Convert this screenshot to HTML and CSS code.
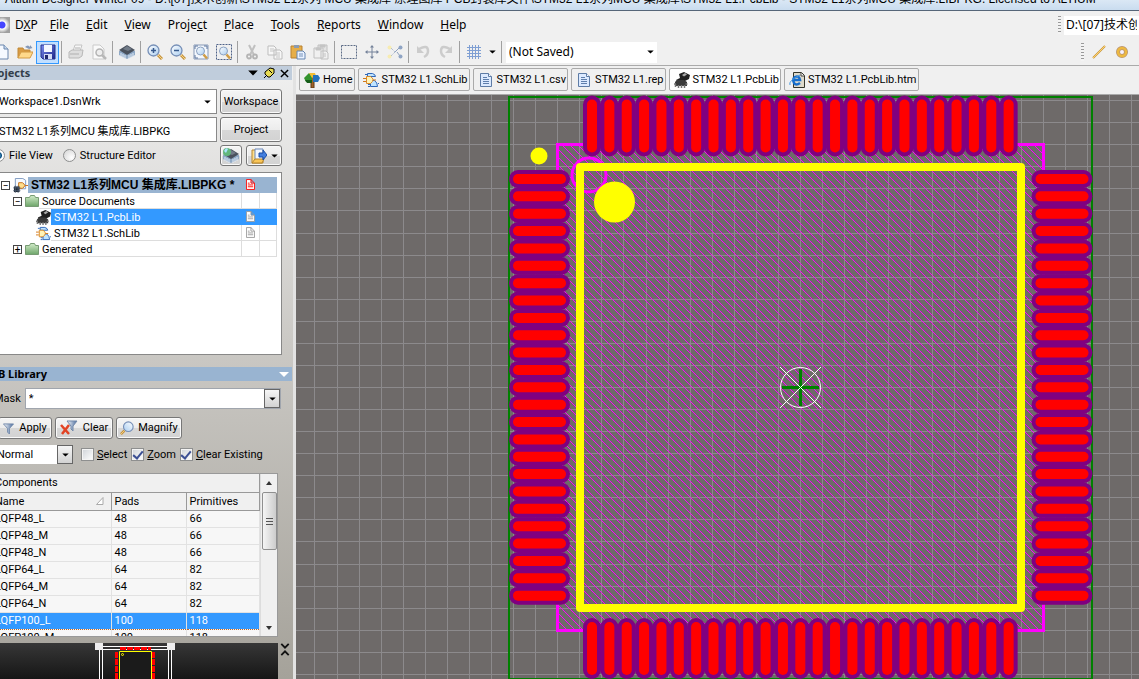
FILE: index.html
```html
<!DOCTYPE html>
<html lang="zh-CN">
<head>
<meta charset="utf-8">
<title>Altium Designer Winter 09</title>
<link rel="stylesheet" href="styles.css">
</head>
<body>
<svg class="defs" aria-hidden="true">
  <defs>
    <linearGradient id="gFolder" x1="0" y1="0" x2="0" y2="1"><stop offset="0" stop-color="#d2ecc9"/><stop offset="1" stop-color="#6da569"/></linearGradient>
    <linearGradient id="gSave" x1="0" y1="0" x2="1" y2="1"><stop offset="0" stop-color="#7d8ff0"/><stop offset="1" stop-color="#1c2488"/></linearGradient>
    <linearGradient id="gLens" x1="0" y1="0" x2="1" y2="1"><stop offset="0" stop-color="#fff"/><stop offset="1" stop-color="#a9cdf0"/></linearGradient>
    <linearGradient id="gFunnel"><stop offset="0" stop-color="#fff"/><stop offset="1" stop-color="#43679b"/></linearGradient>
    <symbol id="i-new" viewBox="0 0 16 16"><path d="M3 1h7l4 4v10H3z" fill="#f5f9ff" stroke="#6b86ad"/><path d="M10 1v4h4" fill="#c8d9ee" stroke="#6b86ad"/></symbol>
    <symbol id="i-open" viewBox="0 0 16 16"><path d="M1 14V4h5l1 2h6v3" fill="#d99b43" stroke="#c18a39"/><path d="M1 14l3-6h12l-3 6z" fill="#ffd98a" stroke="#d29a43"/><path d="M8 3q3-3 5 0V1l2.500 3-3.500 1z" fill="#8498b8"/></symbol>
    <symbol id="i-save" viewBox="0 0 16 16"><path d="M1 1h14v14H3l-2-2z" fill="url(#gSave)" stroke="#27318f"/><path d="M4 1h8v7H4z" fill="#f4f7ff"/><path d="M4 10h8v5H4z" fill="#d5dcf5"/><path d="M5 11h3v4H5z" fill="#20286f"/></symbol>
    <symbol id="i-print" viewBox="0 0 16 16"><path d="M5 7l2-6h7l-2 6" fill="#f7f7f7" stroke="#c4c4c4"/><path d="M1 8l3-2h11l-1 6-3 2H1z" fill="#dedede" stroke="#b8b8b8"/><path d="M2 10h9M7 4h5" stroke="#b0b0b0"/></symbol>
    <symbol id="i-preview" viewBox="0 0 16 16"><path d="M2 1h7l4 4v10H2z" fill="#fafafa" stroke="#cacaca"/><circle cx="8.500" cy="8.500" r="3.500" fill="#eee" stroke="#b4b4b4" stroke-width="1.500"/><path d="M11 11l4 4" stroke="#b8b8b8" stroke-width="2.500"/></symbol>
    <symbol id="i-chip" viewBox="0 0 16 16"><path d="M0 7v4l8 4 8-4V7z" fill="#8fa9c6"/><path d="M2 9v4m2-3v4m2-3v4m4-4v4m2-5v4m2-5v4" stroke="#dfe9f4"/><path d="M0 6l8-5 8 5-8 5z" fill="#49515d"/><path d="M4 5l4-3 5 3-4 2z" fill="#717b88"/></symbol>
    <symbol id="i-mag" viewBox="0 0 16 16"><circle cx="6.500" cy="6.500" r="5.500" fill="url(#gLens)" stroke="#768fb7" stroke-width="1.300"/><path d="M11 11l4 4" stroke="#c6933d" stroke-width="3"/><path d="M11 11l4 4" stroke="#f4d58a"/></symbol>
    <symbol id="i-zin" viewBox="0 0 16 16"><use href="#i-mag"/><path d="M4 6.500h5M6.500 4v5" stroke="#36598d" stroke-width="1.500"/></symbol>
    <symbol id="i-zout" viewBox="0 0 16 16"><use href="#i-mag"/><path d="M4 6.500h5" stroke="#36598d" stroke-width="1.500"/></symbol>
    <symbol id="i-zfit" viewBox="0 0 16 16"><path d="M1 1h14v14H1z" fill="#f4f8fd" stroke="#8799b7"/><path d="M2 5V2h3m6 0h3v3M2 11v3h3" fill="none" stroke="#5f779e"/><circle cx="7.500" cy="7" r="4" fill="url(#gLens)" stroke="#8ba1c1"/><path d="M10.500 10.500l3.500 4" stroke="#cf9c45" stroke-width="2.500"/></symbol>
    <symbol id="i-zarea" viewBox="0 0 16 16"><path d="M.5.5h15v15H.5z" fill="none" stroke="#4f6288" stroke-dasharray="2 1"/><circle cx="7.500" cy="7" r="4" fill="url(#gLens)" stroke="#8ba1c1"/><path d="M10.500 10.500l3.500 4" stroke="#cf9c45" stroke-width="2.500"/></symbol>
    <symbol id="i-cut" viewBox="0 0 16 16"><path d="M5 1l5 10M11 1L6 11" stroke="#c0c0c0" stroke-width="2"/><circle cx="5" cy="12.500" r="2" fill="none" stroke="#b4b4b4" stroke-width="1.800"/><circle cx="11" cy="12.500" r="2" fill="none" stroke="#b4b4b4" stroke-width="1.800"/></symbol>
    <symbol id="i-copy" viewBox="0 0 16 16"><path d="M1 2h6l2 2v7H1zM7 6h6l2 2v7H7z" fill="#f7f7f7" stroke="#bdbdbd"/><path d="M3 5h4M3 7h4m2 2h4m-4 2h4m-4 2h4" stroke="#c5c5c5"/></symbol>
    <symbol id="i-paste" viewBox="0 0 16 16"><path d="M1 2h11v12H1z" fill="#e6ae48" stroke="#b98131"/><path d="M4 1h5v3H4z" fill="#8c9bb0"/><path d="M7 7h6l2 2v6H7z" fill="#e9f2ff" stroke="#6585b1"/><path d="M9 10h4m-4 2h4" stroke="#7591ba"/></symbol>
    <symbol id="i-pastes" viewBox="0 0 16 16"><path d="M5 1h9v9H5z" fill="#e3e3e3" stroke="#c0c0c0"/><path d="M1 4h9v10H1zM8 7h5l2 2v6H8z" fill="#f0f0f0" stroke="#c0c0c0"/><path d="M7 1h5v2H7zM3 4h5v2H3zM10 10h3m-3 2h3" fill="#c4c4c4" stroke="#c4c4c4"/></symbol>
    <symbol id="i-rect" viewBox="0 0 16 16"><path d="M.5 1.500h15v13H.5z" fill="none" stroke="#5d6c87" stroke-dasharray="2 1"/></symbol>
    <symbol id="i-move" viewBox="0 0 16 16"><path d="M8 2v12M2 8h12" stroke="#74829a"/><path d="M8 1l2 2.500H6zM8 15l2-2.500H6zM1 8l2.500-2v4zM15 8l-2.500-2v4z" fill="#74829a"/></symbol>
    <symbol id="i-desel" viewBox="0 0 16 16"><path d="M4 4l4 4-4 4" fill="none" stroke="#8da0bd" stroke-dasharray="1 1"/><path d="M8 8l5-5M10 8l3 4" stroke="#8da0bd"/><circle cx="2.500" cy="3.500" r="2" fill="#f7ecb2"/><circle cx="2.500" cy="12.500" r="2" fill="#f7ecb2"/><circle cx="13.500" cy="3.500" r="2" fill="#8fa4c4"/><circle cx="13.500" cy="12.500" r="2" fill="#8fa4c4"/></symbol>
    <symbol id="i-undo" viewBox="0 0 16 16"><path d="M4 5q9-5 9 2 0 4-4 6" fill="none" stroke="#ccc" stroke-width="2.500"/><path d="M2 2v7h7z" fill="#ccc"/></symbol>
    <symbol id="i-redo" viewBox="0 0 16 16"><path d="M12 5Q3 0 3 7q0 4 4 6" fill="none" stroke="#ccc" stroke-width="2.500"/><path d="M14 2v7H7z" fill="#ccc"/></symbol>
    <symbol id="i-grid" viewBox="0 0 16 16"><path d="M1 3.500h14m-14 3h14m-14 3h14m-14 3h14M3.500 1v14m3-14v14m3-14v14m3-14v14" stroke="#7f9fd3"/></symbol>
    <symbol id="i-down" viewBox="0 0 8 5"><path d="M0 .5h8L4 4.500z" fill="#000"/></symbol>
    <symbol id="i-line" viewBox="0 0 16 16"><path d="M2 14L14 2" stroke="#c9963b" stroke-width="2"/><path d="M2 14L14 2" stroke="#ffd36c"/></symbol>
    <symbol id="i-donut" viewBox="0 0 16 16"><circle cx="8" cy="8" r="4" fill="#f7f2ff" stroke="#b99470" stroke-width="4"/><circle cx="8" cy="8" r="4" fill="none" stroke="#edb941" stroke-width="2.500"/></symbol>
    <symbol id="i-home" viewBox="0 0 16 16"><path d="M7 5h3v11H7z" fill="#9d6126" stroke="#5d3918"/><path d="M0 6l5-5 3 3v6H2z" fill="#35942e"/><path d="M1 8h7v3H3z" fill="#165d1a"/><path d="M5 1h6l1 3-4 2z" fill="#f3bd32"/><path d="M9 3h5l2 3-2 4H9z" fill="#2472bd"/></symbol>
    <symbol id="i-sch" viewBox="0 0 16 16"><path d="M4.500 1.500h5q3 1 3 3h-8zM7.500 8.500h4q3 2 3 6h-7z" fill="#bfe4ff" stroke="#2e67ba"/><path d="M3.500 4.500h4q5 3 0 7h-4z" fill="#fff3b8" stroke="#d98a28"/><path d="M0 6.500h3m-3 3h3m7-1.500h3" fill="none" stroke="#d37918"/><path d="M2 2.500h2m1 10h2m-2 2h2m8-3h1" stroke="#2e67ba"/></symbol>
    <symbol id="i-doc" viewBox="0 0 16 16"><path d="M2.500 1.500h8l3 3v10h-11z" fill="#dceaff" stroke="#5e7ca6"/><path d="M10.500 1.500v3h3" fill="#fff" stroke="#5e7ca6"/><path d="M5 5.500h4m-4 2h6m-6 2h6m-6 2h6" stroke="#5f7fac"/></symbol>
    <symbol id="i-pcb" viewBox="0 0 16 16"><path d="M5 2l5-2 6 3-1 4-4 2v1H4L2 8l4-2z" fill="#202020"/><path d="M8 3l3-2 2 1.500-3 2z" fill="#aaa"/><path d="M3 8h7l3 2v4H1v-4z" fill="#3a3a3a"/><path d="M0 12h2m-.500 3v-3m3 4v-3m3 3v-3m3 3v-3m1-1h2" stroke="#777" stroke-width="1.500"/></symbol>
    <symbol id="i-htm" viewBox="0 0 16 16"><path d="M4.500.5h8l3 3v12h-11z" fill="#dedacb" stroke="#33352c"/><path d="M12 1v3h3" fill="#fff" stroke="#444"/><path d="M11 11q-4 3-6 0-2-4 1-6 4-2 5 3H4" fill="none" stroke="#166dcc" stroke-width="2.500"/><path d="M1 13Q-1 9 11 3" fill="none" stroke="#4597df"/></symbol>
    <symbol id="i-folder" viewBox="0 0 14 12"><path d="M.5 2.500h4l1-2h4l1 2h3v9H.5z" fill="url(#gFolder)" stroke="#779b73"/></symbol>
    <symbol id="i-page" viewBox="0 0 10 12"><path d="M.5.5h5l4 4v7h-9zM5.500.5v4h4M2 4.500h2m-2 2h6m-6 2h6" fill="#fff" stroke="currentColor"/></symbol>
    <symbol id="i-pkg" viewBox="0 0 16 16"><path d="M2.500.5h8l3 2v9h-11z" fill="#f6faff" stroke="#7d98bf"/><path d="M6 5h4q5 3 0 6H6zM13 8h3" fill="#ffdf8d" stroke="#c66d17"/><path d="M1 9h6v6H1z" fill="#222a35"/><path d="M0 10.500h8m-8 3h8M2.500 8v8m3-8v8" stroke="#52647a" stroke-width=".7"/></symbol>
    <symbol id="i-chipball" viewBox="0 0 16 16"><use href="#i-chip"/><circle cx="4" cy="4" r="4" fill="#62b77d"/><path d="M1 3q2-4 4-2L3 5z" fill="#a9e4ff"/></symbol>
    <symbol id="i-import" viewBox="0 0 16 16"><path d="M1 2h5l1 2h5v11H1z" fill="#ffdf8a" stroke="#b5852f"/><path d="M4 1h8v11H4z" fill="#f1f7ff" stroke="#6a87b8"/><path d="M1 15l3-4h9l-2 4z" fill="#f9c658" stroke="#b5852f"/><path d="M8 5h4V2l4 5-4 5V9H8z" fill="#447fdf" stroke="#1b4da2"/></symbol>
    <symbol id="i-funnel" viewBox="0 0 12 12"><path d="M.5 1h11L7 6v6L5 10V6z" fill="url(#gFunnel)" stroke="#7188aa"/></symbol>
    <symbol id="i-unfilter" viewBox="0 0 18 16"><path d="M7 1h10l-4 5v5l-2-2V6z" fill="url(#gFunnel)" stroke="#7188aa"/><path d="M1 5l8 9M9 5l-7 9" stroke="#e24324" stroke-width="2.500"/></symbol>
    <symbol id="i-pin" viewBox="0 0 12 12"><path d="M1 11l3-3" stroke="#000"/><path d="M2 5l5-4 4 1v4L7 10H5L2 7z" fill="#e8dc55" stroke="#000"/><path d="M6 3l3 3" stroke="#000"/></symbol>
    <symbol id="i-x" viewBox="0 0 10 10"><path d="M1 1l8 8M9 1L1 9" stroke="#000" stroke-width="1.600"/></symbol>
    <symbol id="i-fold" viewBox="0 0 10 14"><path d="M1 1l4 4 4-4M1 13l4-4 4 4" fill="none" stroke="#111" stroke-width="2"/></symbol>
  </defs>
</svg>

<div class="app">
  <header class="title">Altium Designer Winter 09 - D:\[07]技术创新\STM32 L1系列 MCU 集成库 原理图库 PCB封装库文件\STM32 L1系列MCU 集成库\STM32 L1.PcbLib - STM32 L1系列MCU 集成库.LIBPKG. Licensed to ALTIUM</header>

  <div class="menubar">
    <span class="logo"></span>
    <nav class="menu">
      <button class="first">D<u>X</u>P</button><button><u>F</u>ile</button><button><u>E</u>dit</button><button><u>V</u>iew</button><button>Proje<u>c</u>t</button><button><u>P</u>lace</button><button><u>T</u>ools</button><button><u>R</u>eports</button><button><u>W</u>indow</button><button><u>H</u>elp</button>
    </nav>
    <span class="grip"></span>
    <input class="path" aria-label="Path" value="D:\[07]技术创新">
  </div>

  <div class="toolbar">
    <button class="tool" aria-label="New"><svg><use href="#i-new"/></svg></button>
    <button class="tool" aria-label="Open"><svg><use href="#i-open"/></svg></button>
    <button class="tool active" aria-label="Save"><svg><use href="#i-save"/></svg></button>
    <i class="sep"></i>
    <button class="tool" aria-label="Print"><svg><use href="#i-print"/></svg></button>
    <button class="tool" aria-label="Preview"><svg><use href="#i-preview"/></svg></button>
    <i class="sep"></i>
    <button class="tool" aria-label="Devices"><svg><use href="#i-chip"/></svg></button>
    <i class="sep"></i>
    <button class="tool" aria-label="Zoom in"><svg><use href="#i-zin"/></svg></button>
    <button class="tool" aria-label="Zoom out"><svg><use href="#i-zout"/></svg></button>
    <button class="tool" aria-label="Fit document"><svg><use href="#i-zfit"/></svg></button>
    <button class="tool" aria-label="Zoom area"><svg><use href="#i-zarea"/></svg></button>
    <i class="sep"></i>
    <button class="tool" aria-label="Cut"><svg><use href="#i-cut"/></svg></button>
    <button class="tool" aria-label="Copy"><svg><use href="#i-copy"/></svg></button>
    <button class="tool" aria-label="Paste"><svg><use href="#i-paste"/></svg></button>
    <button class="tool" aria-label="Paste array"><svg><use href="#i-pastes"/></svg></button>
    <i class="sep"></i>
    <button class="tool" aria-label="Select"><svg><use href="#i-rect"/></svg></button>
    <button class="tool" aria-label="Move"><svg><use href="#i-move"/></svg></button>
    <button class="tool" aria-label="Deselect"><svg><use href="#i-desel"/></svg></button>
    <i class="sep"></i>
    <button class="tool" aria-label="Undo"><svg><use href="#i-undo"/></svg></button>
    <button class="tool" aria-label="Redo"><svg><use href="#i-redo"/></svg></button>
    <i class="sep"></i>
    <button class="tool" aria-label="Grid"><svg><use href="#i-grid"/></svg></button>
    <button class="tool narrow" aria-label="Grid options"><svg class="arrow"><use href="#i-down"/></svg></button>
    <i class="sep"></i>
    <span class="combo saved"><select aria-label="Filter"><option>(Not Saved)</option></select><svg class="arrow"><use href="#i-down"/></svg></span>
    <span class="grip"></span>
    <span class="draw-tools">
      <button class="tool" aria-label="Line"><svg><use href="#i-line"/></svg></button>
      <button class="tool" aria-label="Pad"><svg><use href="#i-donut"/></svg></button>
    </span>
  </div>

  <div class="body">
    <aside class="side">
      <div class="panel-head">
        <h2>Projects</h2>
        <button aria-label="Menu"><svg class="menu-arrow"><use href="#i-down"/></svg></button>
        <button aria-label="Pin"><svg><use href="#i-pin"/></svg></button>
        <button aria-label="Close"><svg class="close"><use href="#i-x"/></svg></button>
      </div>
      <div class="project-form">
        <span class="combo field"><select aria-label="Workspace file"><option>Workspace1.DsnWrk</option></select><svg class="arrow"><use href="#i-down"/></svg></span>
        <button class="btn">Workspace</button>
        <input class="field" aria-label="Project file" value="STM32 L1系列MCU 集成库.LIBPKG">
        <button class="btn">Project</button>
        <div class="views">
          <label><input type="radio" name="view" checked>File View</label>
          <label><input type="radio" name="view">Structure Editor</label>
        </div>
        <div class="view-buttons">
          <button class="btn" aria-label="Compile"><svg><use href="#i-chipball"/></svg></button>
          <button class="btn split" aria-label="Open document"><svg><use href="#i-import"/></svg><svg class="arrow"><use href="#i-down"/></svg></button>
        </div>
      </div>
      <ul class="tree">
        <li class="root"><button class="twist" aria-label="Collapse">−</button><svg class="ic"><use href="#i-pkg"/></svg><span class="name">STM32 L1系列MCU 集成库.LIBPKG *</span><span class="cell red"><svg><use href="#i-page"/></svg></span><span class="cell last"></span></li>
        <li class="l1"><button class="twist" aria-label="Collapse">−</button><svg class="fo"><use href="#i-folder"/></svg><span class="name">Source Documents</span><span class="cell"></span><span class="cell last"></span></li>
        <li class="l2 sel"><svg class="ic"><use href="#i-pcb"/></svg><span class="name">STM32 L1.PcbLib</span><span class="cell"><svg><use href="#i-page"/></svg></span><span class="cell last"></span></li>
        <li class="l2"><svg class="ic"><use href="#i-sch"/></svg><span class="name">STM32 L1.SchLib</span><span class="cell"><svg><use href="#i-page"/></svg></span><span class="cell last"></span></li>
        <li class="l1"><button class="twist" aria-label="Expand">+</button><svg class="fo"><use href="#i-folder"/></svg><span class="name">Generated</span><span class="cell"></span><span class="cell last"></span></li>
      </ul>

      <div class="panel-head library">
        <h2>PCB Library</h2>
        <button aria-label="Library menu"><i class="white-arrow"></i></button>
      </div>
      <div class="mask">
        <label for="mask">Mask</label>
        <span class="combo"><input id="mask" value="*"><button class="drop" aria-label="Masks"><svg class="arrow"><use href="#i-down"/></svg></button></span>
      </div>
      <div class="actions">
        <button class="btn"><svg class="funnel"><use href="#i-funnel"/></svg>Apply</button>
        <button class="btn"><svg class="unfilter"><use href="#i-unfilter"/></svg>Clear</button>
        <button class="btn"><svg class="lens"><use href="#i-mag"/></svg>Magnify</button>
      </div>
      <div class="options">
        <span class="combo"><select aria-label="Mode"><option>Normal</option></select><span class="drop"><svg class="arrow"><use href="#i-down"/></svg></span></span>
        <label><input type="checkbox"><span><u>S</u>elect</span></label>
        <label><input type="checkbox" checked><span><u>Z</u>oom</span></label>
        <label><input type="checkbox" checked><span><u>C</u>lear Existing</span></label>
      </div>
      <div class="components">
        <table>
          <colgroup><col class="c-name"><col class="c-pads"><col></colgroup>
          <thead>
            <tr><th colspan="3">Components</th></tr>
            <tr><th><span class="sort">Name<svg viewBox="0 0 8 8"><path d="M.5 7.500L7 .5v7z" fill="#fff" stroke="#aaa"/></svg></span></th><th>Pads</th><th>Primitives</th></tr>
          </thead>
          <tbody>
            <tr><td>LQFP48_L</td><td>48</td><td>66</td></tr>
            <tr><td>LQFP48_M</td><td>48</td><td>66</td></tr>
            <tr><td>LQFP48_N</td><td>48</td><td>66</td></tr>
            <tr><td>LQFP64_L</td><td>64</td><td>82</td></tr>
            <tr><td>LQFP64_M</td><td>64</td><td>82</td></tr>
            <tr><td>LQFP64_N</td><td>64</td><td>82</td></tr>
            <tr class="sel"><td>LQFP100_L</td><td>100</td><td>118</td></tr>
            <tr><td>LQFP100_M</td><td>100</td><td>118</td></tr>
          </tbody>
        </table>
        <div class="scroll"><i class="up"></i><b></b><i class="dn"></i></div>
      </div>
      <div class="preview-row">
        <div class="preview">
          <svg viewBox="0 0 80 36" aria-label="Footprint preview">
            <path d="M4 3.500h72M4 6.500h72M4.500 6v30M7.500 6v30M73.500 6v30M76.500 6v30" stroke="#fff"/>
            <path d="M0 0h8v7H0zM72 0h8v7h-8z" fill="#eee"/>
            <path d="M25 5.500h31" stroke="#f00" stroke-width="3" stroke-dasharray="6 1"/>
            <path d="M21.500 9v27M58.500 9v27" stroke="#f00" stroke-width="3" stroke-dasharray="6 1"/>
            <path d="M24.500 36V8.500h32V36" fill="#1b1b1b" stroke="#ff0"/>
            <circle cx="27.500" cy="11.500" r="1" fill="none" stroke="#ff0"/>
          </svg>
        </div>
        <button aria-label="Collapse preview"><svg><use href="#i-fold"/></svg></button>
      </div>
    </aside>

    <main class="work">
      <nav class="tabs">
        <button><svg><use href="#i-home"/></svg>Home</button>
        <button><svg><use href="#i-sch"/></svg>STM32 L1.SchLib</button>
        <button><svg><use href="#i-doc"/></svg>STM32 L1.csv</button>
        <button><svg><use href="#i-doc"/></svg>STM32 L1.rep</button>
        <button class="current"><svg><use href="#i-pcb"/></svg>STM32 L1.PcbLib</button>
        <button><svg><use href="#i-htm"/></svg>STM32 L1.PcbLib.htm</button>
      </nav>
      <div class="board">
        <svg id="board" aria-label="LQFP100_L footprint">
          <defs>
            <pattern id="hatch" width="8" height="8" patternUnits="userSpaceOnUse">
              <path d="M0 0h1v1h-1zM1 1h1v1h-1zM2 2h1v1h-1zM3 3h1v1h-1zM4 4h1v1h-1zM5 5h1v1h-1zM6 6h1v1h-1zM7 7h1v1h-1z" fill="#f0f" shape-rendering="crispEdges"/>
            </pattern>
          </defs>
          <g id="grid" stroke="#8c8a8c" shape-rendering="crispEdges"></g>
          <rect x="261.500" y="49.500" width="486" height="486" fill="url(#hatch)" stroke="#f0f" stroke-width="3"/>
          <circle cx="293" cy="80" r="17" fill="none" stroke="#f0f" stroke-width="3"/>
          <rect x="213" y="2" width="583" height="582" fill="none" stroke="#008000" stroke-width="2" shape-rendering="crispEdges"/>
          <g id="pads"></g>
          <rect x="284" y="72" width="441" height="441" fill="none" stroke="#ff0" stroke-width="8" stroke-linejoin="round"/>
          <circle cx="243" cy="61" r="8.500" fill="#ff0"/>
          <circle cx="318.500" cy="107" r="20.500" fill="#ff0"/>
          <path d="M486 292.500h37M504.500 274v37" stroke="#008000" stroke-width="3"/>
          <circle cx="504.500" cy="292.500" r="20" fill="none" stroke="#fff"/>
          <path d="M484 272l41 41M525 272l-41 41" stroke="#fff"/>
        </svg>
      </div>
    </main>
  </div>
</div>
<script src="script.js"></script>
</body>
</html>
```

FILE: styles.css
```css
* { box-sizing: border-box; }
body { margin: 0; overflow: hidden; font: 11px/16px Roboto, "Noto Sans CJK SC", sans-serif; color: #000; background: #f0f0f0; }
button, input, select { font: inherit; color: inherit; margin: 0; }
button { border: 0; background: none; padding: 0; }
select { appearance: none; }
h2 { margin: 0; }
.defs { position: absolute; width: 0; height: 0; }

/* The window hangs over the top left corner of the screen. */
.app { display: flex; flex-direction: column; height: calc(100vh + 12px); margin: -12px 0 0 -20px; }
.title { flex: none; height: 23px; padding-left: 25px; border-bottom: 1px solid #566679; background: linear-gradient(#f0f6fc, #c9dcef); font: 13px/23px "Liberation Sans", "Noto Sans CJK SC", sans-serif; font-size: 12px; white-space: nowrap; overflow: hidden; }

.menubar { flex: none; display: flex; align-items: center; height: 28px; padding-left: 15px; font: 12px/20px "Noto Sans", "Noto Sans CJK SC", sans-serif; }
.logo { width: 15px; height: 16px; background: radial-gradient(circle at 7px 8px, #44f 3px, #fff 4px, #a0a0a0 8px); }
.menu { display: flex; gap: 17px; flex: 1; padding-left: 5px; }
.menu .first { margin-right: -5px; }
.grip { width: 3px; height: 18px; margin-right: 3px; background: repeating-linear-gradient(#999 0 1px, #f4f4f4 1px 3px); }
.path { width: 75px; height: 19px; border: 0; padding: 0 2px; background: #fff; }

.toolbar { flex: none; display: flex; align-items: center; height: 27px; padding-left: 10px; border-bottom: 1px solid #aaa; }
.tool { flex: none; display: grid; place-items: center; width: 23px; height: 23px; }
.tool svg { width: 16px; height: 16px; }
.tool.active { background: #c2dfff; border: 1px solid #3399ff; }
.tool.narrow { width: 14px; }
.tool .arrow, .arrow { flex: none; width: 7px; height: 4px; }
.sep { flex: none; width: 1px; height: 22px; margin: 0 2px; background: #a0a0a0; }
.combo { display: flex; align-items: center; background: #fff; }
.combo select, .combo input { flex: 1; min-width: 0; border: 0; background: none; padding: 0; }
.saved { width: 151px; height: 21px; padding: 0 3px; margin: 0 auto 0 2px; font: 12px/20px "Noto Sans", sans-serif; }
.draw-tools { display: flex; width: 52px; overflow: hidden; }

.body { flex: 1; display: flex; min-height: 0; }
.side { flex: none; display: flex; flex-direction: column; width: 316px; border-right: 3px solid #e2e2e2; background: linear-gradient(#f0f0f0, #cbc9c5 45%, #a5a29a); }
.panel-head { flex: none; display: flex; align-items: center; gap: 5px; height: 14px; margin-right: 1px; padding: 0 3px 0 6px; background: #c0cddc; color: #333e4a; }
.panel-head h2 { flex: 1; font: bold 11px/14px "Noto Sans", sans-serif; }
.panel-head button { display: grid; place-items: center; }
.panel-head svg { width: 12px; height: 12px; }
.panel-head .menu-arrow { width: 10px; height: 6px; }
.panel-head .close { width: 9px; height: 9px; }
.panel-head.library { margin-top: 12px; background: #99b4d1; color: #000; padding-left: 4px; }
.white-arrow { border: 5px solid transparent; border-top-color: #fff; border-bottom: 0; }

.project-form { flex: none; display: grid; grid-template-columns: 1fr 62px; gap: 3px; padding: 9px 11px 6px 15px; }
.field { height: 25px; min-width: 0; border: 1px solid #898989; background: #fff; padding: 0 5px 0 3px; }
.btn { display: flex; align-items: center; justify-content: center; border: 1px solid #777; border-radius: 3px; background: linear-gradient(#f5f5f5, #ececec 50%, #d8d8d8 51%, #d2d2d2); box-shadow: inset 0 0 0 1px #fafafa; }
.views { display: flex; align-items: center; gap: 10px; margin-left: -3px; }
.views label { display: flex; align-items: center; gap: 4px; white-space: nowrap; }
input[type="radio"] { appearance: none; width: 13px; height: 13px; border: 1px solid #8e8f8f; border-radius: 50%; background: radial-gradient(circle at 70% 70%, #fff, #d3d3d3); }
input[type="radio"]:checked { background: radial-gradient(circle, #7fd0f7, #0b4f81 3px, #fff 4px); }
.view-buttons { display: flex; gap: 4px; height: 21px; }
.view-buttons .btn { width: 22px; }
.view-buttons svg { width: 16px; height: 16px; }
.view-buttons .split { flex: 1; gap: 4px; }
.view-buttons .arrow { width: 7px; height: 4px; }

.tree { flex: none; list-style: none; height: 183px; margin: 0 11px 0 0; padding: 4px 4px 0 20px; border: 1px solid #888; background: #fff; }
.tree li { display: flex; align-items: center; height: 16px; }
.tree svg { flex: none; }
.twist { flex: none; display: grid; place-items: center; width: 9px; height: 9px; border: 1px solid #444; font-size: 10px; line-height: 7px; }
.tree .ic { width: 15px; height: 15px; }
.tree .fo { width: 14px; height: 12px; }
.twist { margin-right: 3px; }
.l1 { padding-left: 12px; }
.l2 { padding-left: 35px; }
.name { flex: 1; min-width: 0; height: 16px; padding-left: 3px; border-bottom: 1px solid #ddd; line-height: 17px; white-space: nowrap; }
.root .name { font: bold 12px/16px "Liberation Sans", "Noto Sans CJK SC", sans-serif; }
.cell { flex: none; display: grid; place-items: center; width: 18px; height: 16px; border: 1px solid #ddd; border-width: 0 0 1px 1px; color: #999; }
.cell.last { border-right-width: 1px; }
.cell svg { width: 9px; height: 11px; }
.root .name, .root .cell { background: #99b4d1; border-color: #99b4d1; }
.cell.red { color: #f00; }
.sel .name, .sel .cell { background: #3399ff; border-color: #3399ff; }
.sel .name { color: #fff; }

.mask { flex: none; display: flex; align-items: center; gap: 4px; padding: 7px 12px 0 14px; }
.mask .combo { flex: 1; height: 21px; border: 1px solid #a0a5ad; }
.mask input { height: 19px; padding-left: 3px; }
.drop { display: grid; place-items: center; width: 16px; height: 19px; border: 1px solid #666; background: linear-gradient(#f5f5f5, #d2d2d2); }
.actions { flex: none; display: flex; gap: 3px; padding: 8px 0 0 18px; }
.actions .btn { height: 22px; width: 54px; gap: 5px; }
.actions .btn:nth-child(2) { width: 58px; }
.actions .btn:nth-child(3) { width: 66px; gap: 4px; }
.funnel { width: 11px; height: 11px; }
.unfilter { width: 18px; height: 16px; }
.lens { width: 14px; height: 14px; transform: scaleX(-1); }
.options { flex: none; display: flex; align-items: center; gap: 4px; padding: 6px 0 0 15px; }
.options .combo { width: 78px; height: 19px; margin-right: 4px; padding-left: 2px; }
.options label { display: flex; align-items: center; gap: 3px; white-space: nowrap; }
input[type="checkbox"] { appearance: none; display: grid; place-items: center; width: 13px; height: 13px; border: 1px solid #8e8f8f; background: linear-gradient(135deg, #cfd3d8, #fff); box-shadow: inset 0 0 0 1px #f4f4f4; }
input[type="checkbox"]:checked::after { content: ""; width: 4px; height: 8px; margin-bottom: 2px; border: solid #3b4f94; border-width: 0 2px 2px 0; transform: rotate(40deg); }

.components { flex: none; display: flex; height: 164px; margin: 9px 15px 0 0; border: 1px solid #999; overflow: hidden; background: #f1f1f1; }
table { flex: 1; border-collapse: collapse; table-layout: fixed; align-self: flex-start; background: #f7f7f7; }
.c-name { width: 130px; }
.c-pads { width: 75px; }
th, td { height: 17px; padding: 0 3px; text-align: left; font-weight: normal; line-height: 16px; border: 1px solid #e2e2e2; border-left-width: 0; border-top: 0; }
th { height: 18px; line-height: 17px; background: #f0f0f0; border-color: #999; }
th:first-child, td:first-child { padding-left: 14px; }
.sort { display: flex; align-items: center; justify-content: space-between; padding-right: 4px; }
.sort svg { width: 8px; height: 8px; }
tr.sel td { background: #3399ff; color: #fff; border-top: 1px dotted #c4661f; border-bottom: 1px dotted #c4661f; }
.scroll { display: flex; flex-direction: column; align-items: center; width: 17px; background: #f0f0f0; border-left: 1px solid #ddd; }
.scroll b { width: 15px; height: 58px; border: 1px solid #8f8f8f; border-radius: 2px; background: linear-gradient(#555, #555) center 25px / 7px 1px no-repeat, linear-gradient(#555, #555) center 28px / 7px 1px no-repeat, linear-gradient(#555, #555) center 31px / 7px 1px no-repeat, linear-gradient(90deg, #f5f5f5, #ccc); }
.up { margin: 7px 0; border: 3px solid transparent; border-bottom: 4px solid #333; border-top: 0; }
.dn { margin: auto 0 6px; border: 3px solid transparent; border-top: 4px solid #333; border-bottom: 0; }
.preview-row { flex: 1; display: flex; align-items: flex-start; gap: 2px; min-height: 0; padding-top: 6px; }
.preview { align-self: stretch; width: 298px; padding-left: 115px; overflow: hidden; background: linear-gradient(#373737, #161616); }
.preview svg { display: block; width: 80px; height: 36px; }
.preview-row button svg { display: block; width: 10px; height: 13px; }

.work { flex: 1; min-width: 0; display: flex; flex-direction: column; }
.tabs { flex: none; display: flex; gap: 3px; height: 29px; padding: 2px 3px 3px; border-bottom: 1px solid #aaa; }
.tabs button { display: flex; align-items: center; gap: 3px; padding: 0 1px 0 4px; border: 1px solid #aaa; border-radius: 2px; white-space: nowrap; }
.tabs svg { width: 16px; height: 16px; }
.tabs .current { background: #fff; }
.board { flex: 1; min-height: 0; background: #6e6a69; overflow: hidden; }
.board svg { display: block; width: 100%; height: 100%; }
```

FILE: script.js
```js
const NS = "http://www.w3.org/2000/svg";

function add(parent, tag, attrs) {
  const el = document.createElementNS(NS, tag);
  for (const key in attrs) el.setAttribute(key, attrs[key]);
  parent.appendChild(el);
}

// Snap grid, centred on the footprint origin.
const grid = document.getElementById("grid");
const step = 22.07;
for (let k = -23; k <= 60; k++) {
  const x = Math.round(504 + k * step) + 0.5;
  const y = Math.round(292 + k * step) + 0.5;
  add(grid, "line", { x1: x, x2: x, y1: 0, y2: "100%" });
  add(grid, "line", { x1: 0, x2: "100%", y1: y, y2: y });
}

// 25 pads on each side: solder mask below, copper above.
const pads = document.getElementById("pads");
const pitch = 17.36;
function row(width, colour) {
  const style = { stroke: colour, "stroke-width": width, "stroke-linecap": "round" };
  for (let i = 0; i < 25; i++) {
    const x = 296 + i * pitch;
    const y = 84 + i * pitch;
    add(pads, "line", { x1: x, x2: x, y1: 9.5, y2: 52.5, ...style });
    add(pads, "line", { x1: x, x2: x, y1: 532, y2: 575, ...style });
    add(pads, "line", { x1: 222, x2: 265, y1: y, y2: y, ...style });
    add(pads, "line", { x1: 744.5, x2: 787.5, y1: y, y2: y, ...style });
  }
}
row(18, "#800080");
row(10, "#ff0000");
```
